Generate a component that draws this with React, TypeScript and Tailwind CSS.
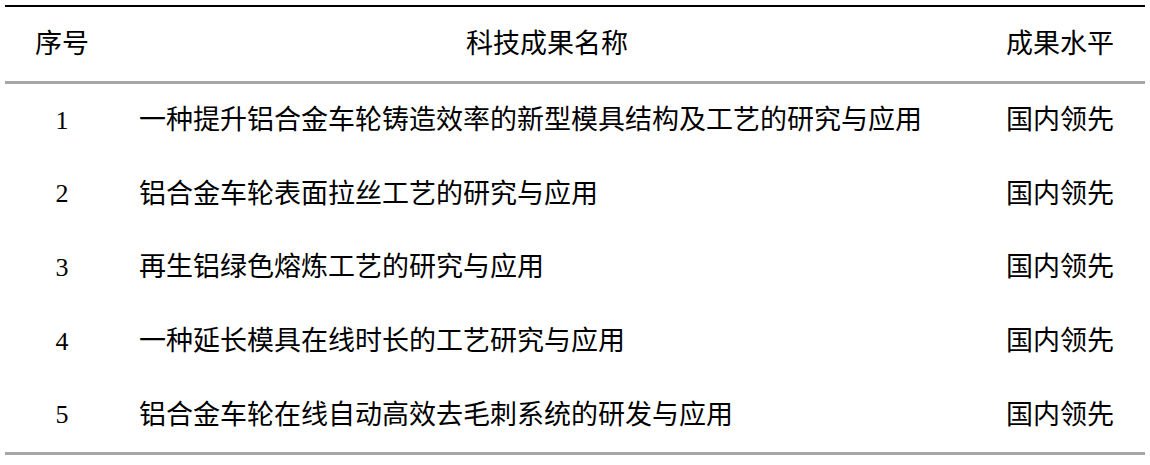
import React from "react";

const rows = [
  ["1", "一种提升铝合金车轮铸造效率的新型模具结构及工艺的研究与应用", "国内领先"],
  ["2", "铝合金车轮表面拉丝工艺的研究与应用", "国内领先"],
  ["3", "再生铝绿色熔炼工艺的研究与应用", "国内领先"],
  ["4", "一种延长模具在线时长的工艺研究与应用", "国内领先"],
  ["5", "铝合金车轮在线自动高效去毛刺系统的研发与应用", "国内领先"],
];

export default function App() {
  return (
    <div
      className="w-[1150px] h-[465px] bg-white text-black pt-[5px] px-[5px]"
      style={{ fontFamily: '"Liberation Serif", "Noto Sans CJK SC", serif' }}
    >
      <div className="w-[1140px] border-t-2 border-black">
        <div className="flex h-[77px] items-center text-[27px] leading-none border-b-[3px] border-[#a6a6a6]">
          <div className="w-[114px] text-center">序号</div>
          <div className="w-[856px] text-center">科技成果名称</div>
          <div className="w-[170px] text-center">成果水平</div>
        </div>
        <div className="border-b-[3px] border-[#a6a6a6]">
          {rows.map((r) => (
            <div key={r[0]} className="flex h-[73.6px] items-center text-[27px] leading-none">
              <div className="w-[114px] text-center text-[26px]">{r[0]}</div>
              <div className="w-[856px] pl-[20px]">{r[1]}</div>
              <div className="w-[170px] text-center">{r[2]}</div>
            </div>
          ))}
        </div>
      </div>
    </div>
  );
}
